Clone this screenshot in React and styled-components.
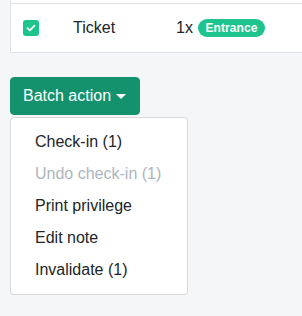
import React, { useState } from 'react'
import styled, { createGlobalStyle } from 'styled-components'

const GlobalStyle = createGlobalStyle`
  body {
    margin: 0;
    background: #f5f6f8;
    font-family: "Liberation Sans", Arial, sans-serif;
    color: #212529;
    overflow: hidden;
  }
`

const Page = styled.div`
  padding: 0 0 0 10px;
`

// the table runs on past the right edge of the window, so no right border
const Card = styled.div`
  background: white;
  border: 1px solid #dee2e6;
  border-top: 0;
  border-right: 0;
  padding-top: 3px;
`

const Row = styled.div`
  display: flex;
  align-items: center;
  border-top: 1px solid #dee2e6;
  height: 48px;
  font-size: 16px;
  line-height: 24px;
`

const Cell = styled.div`
  padding: 0 12px;
  width: ${(p) => (p.width ? `${p.width}px` : 'auto')};
  flex: ${(p) => (p.width ? '0 0 auto' : '1 1 auto')};
  display: flex;
  align-items: center;
  gap: 5px;
  box-sizing: border-box;
  min-width: 0;
`

const Check = styled.span`
  width: 16px;
  height: 16px;
  border-radius: 3px;
  background: #1dc48e;
  display: flex;
  align-items: center;
  justify-content: center;
`

const Badge = styled.span`
  background: #1dc48e;
  color: white;
  font-weight: 700;
  font-size: 12px;
  line-height: 12px;
  padding: 3px 7.5px;
  border-radius: 10rem;
  letter-spacing: 0.1px;
`

const Actions = styled.div`
  margin-top: 24px;
  display: inline-flex;
  flex-direction: column;
`

const Toggle = styled.button`
  align-self: flex-start;
  background: #14926e;
  color: white;
  border: 1px solid #14926e;
  border-radius: 4px;
  font-family: inherit;
  font-size: 16px;
  line-height: 24px;
  padding: 6px 11px 6px 12px;
  display: flex;
  align-items: center;
  width: 130px;

  &::after {
    content: '';
    margin-left: 5px;
    border-top: 5px solid white;
    border-left: 5px solid transparent;
    border-right: 5px solid transparent;
  }
`

const Menu = styled.div`
  margin-top: 2px;
  width: 178px;
  box-sizing: border-box;
  background: white;
  border: 1px solid rgba(0, 0, 0, 0.15);
  border-radius: 4px;
  padding: 8px 0;
`

const Item = styled.div`
  padding: 4px 24px;
  font-size: 16px;
  line-height: 24px;
  color: ${(p) => (p.disabled ? '#adb5bd' : '#212529')};
  white-space: nowrap;
`

const items = [
  { label: 'Check-in (1)' },
  { label: 'Undo check-in (1)', disabled: true },
  { label: 'Print privilege' },
  { label: 'Edit note' },
  { label: 'Invalidate (1)' },
]

export default function App() {
  const [open] = useState(true)
  return (
    <Page>
      <GlobalStyle />
      <Card>
        <Row>
          <Cell width={50}>
            <Check>
              <svg width="10" height="8" viewBox="0 0 10 8">
                <path d="M1.5 4.2 L3.8 6.3 L8.5 1.6" fill="none" stroke="white" strokeWidth="1.8" strokeLinecap="round" strokeLinejoin="round" />
              </svg>
            </Check>
          </Cell>
          <Cell width={103}>Ticket</Cell>
          <Cell>
            <span>1x</span>
            <Badge>Entrance</Badge>
          </Cell>
        </Row>
      </Card>
      <Actions>
        <Toggle>Batch action</Toggle>
        {open && (
          <Menu>
            {items.map((it) => (
              <Item key={it.label} disabled={it.disabled}>{it.label}</Item>
            ))}
          </Menu>
        )}
      </Actions>
    </Page>
  )
}
